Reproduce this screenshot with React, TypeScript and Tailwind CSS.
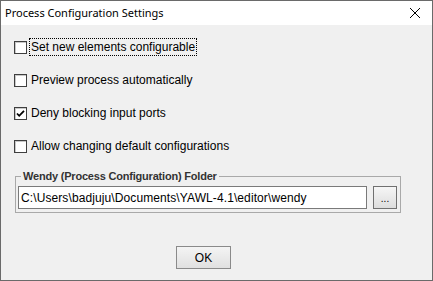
import React from "react";

const Box: React.FC<{ checked?: boolean }> = ({ checked }) => (
  <span className="w-[13px] h-[13px] shrink-0 border border-[#3f3f3f] bg-white shadow-[inset_1px_1px_0_#c8c8c8] flex items-center justify-center">
    {checked && (
      <svg width="9" height="9" viewBox="0 0 9 9">
        <path d="M1 4.5 L3.2 6.8 L8 1.8" fill="none" stroke="#000" strokeWidth="1.8" />
      </svg>
    )}
  </span>
);

const Row: React.FC<{ label: string; checked?: boolean; focused?: boolean }> = ({ label, checked, focused }) => (
  <div className="h-[20px] flex items-center pl-[13px]">
    <Box checked={checked} />
    <span
      className={
        "ml-[2px] px-[1px] h-[18px] flex items-center border " +
        (focused ? "border-dotted border-black" : "border-transparent")
      }
    >
      {label}
    </span>
  </div>
);

export default function App() {
  return (
    <div
      className="w-[433px] h-[281px] border border-[#6a6a6a] bg-[#f0f0f0] flex flex-col text-[12px] text-black"
      style={{ fontFamily: '"Liberation Sans", Arial, sans-serif' }}
    >
      <div className="h-[24px] bg-white flex items-center justify-between pl-[4px] pr-[12px]">
        <span className="text-[11px] text-black" style={{ fontFamily: '"Noto Sans", "Open Sans", sans-serif' }}>
          Process Configuration Settings
        </span>
        <svg width="10" height="10" viewBox="0 0 10 10">
          <path d="M0 0 L10 10 M10 0 L0 10" stroke="#000" strokeWidth="1" />
        </svg>
      </div>

      <div className="flex flex-col gap-[13px] pt-[12px]">
        <Row label="Set new elements configurable" focused />
        <Row label="Preview process automatically" />
        <Row label="Deny blocking input ports" checked />
        <Row label="Allow changing default configurations" />
      </div>

      <fieldset className="mt-[13px] ml-[14px] w-[386px] border border-[#a9a9a9] px-[2px] pb-[3px]">
        <legend className="ml-[3px] px-[2px] font-bold text-[11px] tracking-[-0.2px] text-[#333] leading-[14px]">
          Wendy (Process Configuration) Folder
        </legend>
        <div className="mt-[3px] flex gap-[6px]">
          <div className="w-[349px] h-[23px] bg-white border border-[#7a7a7a] flex items-center pl-[2px] tracking-[0.1px]">
            C:\Users\badjuju\Documents\YAWL-4.1\editor\wendy
          </div>
          <button className="w-[24px] h-[23px] border border-[#707070] bg-gradient-to-b from-[#f6f6f6] to-[#dddddd] flex items-end justify-center pb-[4px] text-[10px] leading-none">
            ...
          </button>
        </div>
      </fieldset>

      <div className="mt-[33px] pl-[175px]">
        <button className="w-[55px] h-[23px] border border-[#8a8a8a] bg-gradient-to-b from-[#f4f4f4] to-[#e0e0e0] flex items-center justify-center text-[12px]">
          OK
        </button>
      </div>
    </div>
  );
}
